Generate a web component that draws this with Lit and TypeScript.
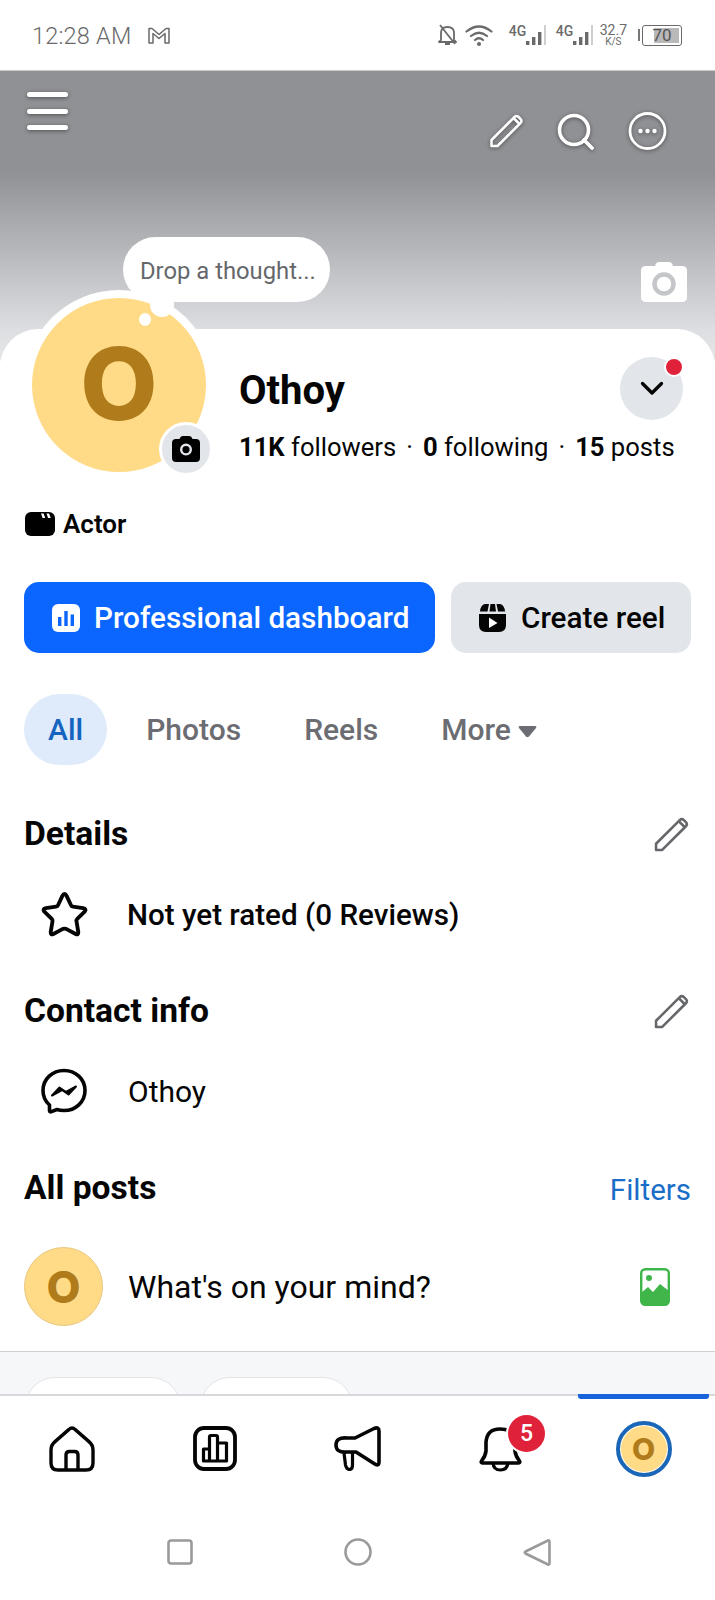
import { LitElement, css, html, svg } from "lit";
import { customElement } from "lit/decorators.js";

const pencilPath = svg`<path d="M2 32V26L25 3Q27 1 29 3L31 5Q33 7 31 9L8 32Z" fill="none" stroke="currentColor" stroke-width="2.5" stroke-linejoin="round"/><path d="M24.5 4.5L29.5 9.5" fill="none" stroke="currentColor" stroke-width="2.5"/>`;

const pencil = html`<svg class="pencil" viewBox="0 0 34 34">${pencilPath}</svg>`;

const cameraPath = "M9 3Q9.6 1 12 1H18Q20.4 1 21 3L21.5 4H25Q29 4 29 8V23Q29 27 25 27H5Q1 27 1 23V8Q1 4 5 4H8.5ZM15 8.5A6 6 0 1 0 15 20.5A6 6 0 1 0 15 8.5ZM15 11A3.6 3.6 0 1 1 15 18.2A3.6 3.6 0 1 1 15 11Z";

const bars = html`<svg width="22" height="21" viewBox="0 0 22 21">
  <path d="M1 16h3.4v4H1zM7 12h3.4v8H7zM13 7h3.4v13H13z" fill="#6a6a6a"/>
  <path d="M19 0h2v20h-2z" fill="#cfcfcf"/>
</svg>`;

@customElement("app-root")
export class AppRoot extends LitElement {
  render() {
    return html`
      <div class="status">
        <span class="status__time">12:28 AM</span>
        <svg class="status__gmail" viewBox="0 0 24 17">
          <path d="M2 16V1.5H5L12 7.5L19 1.5H22V16H18V6.5L12 11.5L6 6.5V16Z" fill="none" stroke="#6a6a6a" stroke-width="1.5" stroke-linejoin="round"/>
        </svg>
        <div class="status__right">
          <svg width="19" height="22" viewBox="0 0 19 22">
            <path d="M3 16V9Q3 3 9.5 3Q16 3 16 9V16L18 18H1L3 16ZM7 20H12M2 1L17 20" fill="none" stroke="#6a6a6a" stroke-width="1.8" stroke-linejoin="round"/>
          </svg>
          <svg class="status__wifi" width="28" height="22" viewBox="0 0 28 22">
            <path d="M1.5 7.5Q14 -2.5 26.5 7.5M6 12Q14 5.5 22 12M10 16Q14 12.5 18 16" fill="none" stroke="#6a6a6a" stroke-width="2.2" stroke-linecap="round"/>
            <circle cx="14" cy="20" r="2" fill="#6a6a6a"/>
          </svg>
          <div class="signal signal--first"><span class="signal__label">4G</span>${bars}</div>
          <div class="signal"><span class="signal__label">4G</span>${bars}</div>
          <div class="speed"><span>32.7</span><span class="speed__unit">K/S</span></div>
          <div class="battery">
            <span class="battery__nub"></span>
            <div class="battery__body"><span class="battery__fill"></span><span class="battery__num">70</span></div>
          </div>
        </div>
      </div>

      <div class="cover">
        <div class="cover__burger"><span></span><span></span><span></span></div>
        <div class="cover__actions">
          <svg width="35" height="34" viewBox="0 0 34 34">${pencilPath}</svg>
          <svg width="38" height="37" viewBox="0 0 38 37">
            <circle cx="17" cy="17" r="14.5" fill="none" stroke="#fff" stroke-width="3.6"/>
            <path d="M27 27L35 35" stroke="#fff" stroke-width="3.8" stroke-linecap="round"/>
          </svg>
          <svg width="39" height="38" viewBox="0 0 39 38">
            <circle cx="19.5" cy="19" r="17.5" fill="none" stroke="#fff" stroke-width="2.8"/>
            <circle cx="12.5" cy="19" r="2.2" fill="#fff"/>
            <circle cx="19.5" cy="19" r="2.2" fill="#fff"/>
            <circle cx="26.5" cy="19" r="2.2" fill="#fff"/>
          </svg>
        </div>
        <div class="bubble">Drop a thought...</div>
        <svg class="cover__camera" width="46" height="40" viewBox="0 0 46 40">
          <path d="M14 4Q15 0 18 0H28Q31 0 32 4H41Q46 4 46 9V35Q46 40 41 40H5Q0 40 0 35V9Q0 4 5 4Z" fill="#fff"/>
          <circle cx="23" cy="22" r="9.5" fill="none" stroke="#c4c6c9" stroke-width="4.5"/>
        </svg>
      </div>

      <div class="card">
        <div class="head">
          <div class="avatar">
            <div class="avatar__disc">O</div>
            <span class="avatar__puff"></span>
            <span class="avatar__dot"></span>
            <div class="avatar__badge">
              <svg width="30" height="28" viewBox="0 0 30 28"><path fill-rule="evenodd" d="${cameraPath}"/></svg>
            </div>
          </div>
          <div class="info">
            <div class="info__top">
              <div class="info__name">Othoy</div>
              <div class="info__more">
                <svg width="24" height="15" viewBox="0 0 24 15"><path d="M2.5 2.5L12 12L21.5 2.5" fill="none" stroke="#050505" stroke-width="3.3" stroke-linecap="round" stroke-linejoin="round"/></svg>
                <span class="info__dot"></span>
              </div>
            </div>
            <div class="info__stats"><b>11K</b> followers<span class="info__sep">·</span><b>0</b> following<span class="info__sep">·</span><b>15</b> posts</div>
          </div>
        </div>

        <div class="actor">
          <svg width="30" height="24" viewBox="0 0 30 24">
            <rect width="30" height="24" rx="6"/>
            <path d="M16 1.5h2.6l1.6 4.5h-2.6zM21.5 1.5h2.6l1.6 4.5h-2.6z" fill="#fff"/>
          </svg>
          <span>Actor</span>
        </div>

        <div class="btns">
          <div class="btn btn--primary">
            <svg width="28" height="28" viewBox="0 0 28 28">
              <rect width="28" height="28" rx="6" fill="#fff"/>
              <path d="M6 13h3.4v9H6zM12.3 7h3.4v15h-3.4zM18.6 10.5H22V22h-3.4z" fill="#0a66ff"/>
            </svg>
            <span>Professional dashboard</span>
          </div>
          <div class="btn btn--gray">
            <svg width="29" height="29" viewBox="0 0 29 29">
              <path d="M1 11H28V22Q28 29 21 29H8Q1 29 1 22Z" fill="#050505"/>
              <path d="M7 1H11L9.5 8.5H2Q2.5 2 7 1ZM12.5 1H17L18 8.5H11.5ZM18.5 1H22Q26.5 2 27 8.5H20Z" fill="#050505"/>
              <path d="M11 14.5L19.5 20L11 25Z" fill="#fff"/>
            </svg>
            <span>Create reel</span>
          </div>
        </div>

        <div class="tabs">
          <div class="tab tab--on">All</div>
          <div class="tab">Photos</div>
          <div class="tab">Reels</div>
          <div class="tab">More<svg class="tab__caret" width="19" height="13" viewBox="0 0 19 13"><path d="M2 1H17Q19 1 18 3L11 11.5Q9.5 13 8 11.5L1 3Q0 1 2 1Z" fill="#6b6d72"/></svg></div>
        </div>

        <div class="sec sec--details">
          <h2>Details</h2>
          ${pencil}
        </div>
        <div class="row row--details">
          <svg width="51" height="48" viewBox="0 0 48 45">
            <path d="M24 3.5Q25 3.5 26 5.5L30 14Q30.6 15.4 32 15.6L41.5 17Q45 17.7 43.2 20L36 27Q35 28 35.3 29.5L37 39.5Q37.3 42.5 34.5 41.3L25.5 36.5Q24 36 22.5 36.5L13.5 41.3Q10.7 42.5 11 39.5L12.7 29.5Q13 28 12 27L4.8 20Q3 17.7 6.5 17L16 15.6Q17.4 15.4 18 14L22 5.5Q23 3.5 24 3.5Z" fill="none" stroke="#050505" stroke-width="3.6" stroke-linejoin="round"/>
          </svg>
          <span class="row__strong">Not yet rated (0 Reviews)</span>
        </div>

        <div class="sec sec--contact">
          <h2>Contact info</h2>
          ${pencil}
        </div>
        <div class="row row--contact">
          <svg width="48" height="46" viewBox="0 0 48 46">
            <path d="M24 2.5C12.5 2.5 3 11 3 22.5C3 28.5 5.5 33.5 9.5 37V42.5Q9.5 44.5 11.5 43.6L17 41.5C19 42.2 21.5 42.5 24 42.5C35.5 42.5 45 34 45 22.5C45 11 35.5 2.5 24 2.5Z" fill="none" stroke="#050505" stroke-width="3.6" stroke-linejoin="round"/>
            <path d="M12 27.5L19.5 19.5L26 24L36 18.5L28.5 26.5L22 22Z" fill="#050505" stroke="#050505" stroke-width="2" stroke-linejoin="round"/>
          </svg>
          <span>Othoy</span>
        </div>

        <div class="sec sec--posts">
          <h2>All posts</h2>
          <span class="sec__link">Filters</span>
        </div>
        <div class="composer">
          <div class="composer__avatar">O</div>
          <span class="composer__text">What's on your mind?</span>
          <svg width="30" height="38" viewBox="0 0 30 38">
            <rect x="1.2" y="1.2" width="27.6" height="35.6" rx="4" fill="#fff" stroke="#3fb54a" stroke-width="2.4"/>
            <path d="M1 25L8 19L13 24L20 16L29 23V33Q29 37 25 37H5Q1 37 1 33Z" fill="#3fb54a"/>
            <circle cx="9" cy="10" r="3" fill="#3fb54a"/>
          </svg>
        </div>
      </div>

      <div class="feed">
        <span class="feed__chip feed__chip--a"></span>
        <span class="feed__chip feed__chip--b"></span>
      </div>

      <nav class="nav">
        <div class="nav__cell">
          <svg width="46" height="46" viewBox="0 0 46 46">
            <path d="M23 2Q24.6 2 26 3.4L40 15.6Q44 19 44 24V37Q44 44 37 44H9Q2 44 2 37V24Q2 19 6 15.6L20 3.4Q21.4 2 23 2Z" fill="none" stroke="#050505" stroke-width="3.4" stroke-linejoin="round"/>
            <path d="M17 44V29Q17 25.5 20.5 25.5H25.5Q29 25.5 29 29V44" fill="none" stroke="#050505" stroke-width="3.4"/>
          </svg>
        </div>
        <div class="nav__cell">
          <svg width="44" height="45" viewBox="0 0 44 45">
            <rect x="2" y="2" width="40" height="41" rx="9" fill="none" stroke="#050505" stroke-width="3.8"/>
            <path d="M10.5 35V23H16.5V11Q16.5 9.5 18 9.5H23Q24.5 9.5 24.5 11V17H33.5V35ZM16.5 23V35M24.5 17V35" fill="none" stroke="#050505" stroke-width="3.2" stroke-linejoin="round"/>
          </svg>
        </div>
        <div class="nav__cell">
          <svg width="47" height="45" viewBox="0 0 47 45">
            <path d="M13 12H21L40 2.5Q45 0.5 45 5V36Q45 41 40 37.5L22 26H13Q2 27 2 19Q2 11 13 12Z" fill="none" stroke="#050505" stroke-width="3.6" stroke-linejoin="round"/>
            <path d="M10 27L11.5 39Q12.5 43.5 15.5 43.5Q18.5 43.5 18.5 39V27" fill="none" stroke="#050505" stroke-width="3.2"/>
          </svg>
        </div>
        <div class="nav__cell">
          <div class="bell">
            <svg width="43" height="46" viewBox="0 0 43 46">
              <path d="M21 3Q8 3 7 16V25Q6.5 30 2.5 35Q1.5 37 4 37H39Q41.5 37 40.5 35Q36.5 30 36 25V16Q35 3 21 3Z" fill="none" stroke="#050505" stroke-width="3.6" stroke-linejoin="round"/>
              <path d="M14 37Q14.5 44 21.5 44Q28 44 29 37" fill="none" stroke="#050505" stroke-width="3.2"/>
            </svg>
            <span class="bell__badge">5</span>
          </div>
        </div>
        <div class="nav__cell">
          <span class="nav__bar"></span>
          <div class="nav__me"><span>O</span></div>
        </div>
      </nav>

      <div class="android">
        <span class="android__item"><svg width="26" height="26" viewBox="0 0 26 26"><rect x="1.5" y="1.5" width="23" height="23" rx="2.5" fill="none" stroke="#9a9a9a" stroke-width="2.6"/></svg></span>
        <span class="android__item"><svg width="28" height="28" viewBox="0 0 28 28"><circle cx="14" cy="14" r="12.5" fill="none" stroke="#9a9a9a" stroke-width="2.6"/></svg></span>
        <span class="android__item"><svg width="28" height="29" viewBox="0 0 28 29"><path d="M25 2.5Q26.5 2 26.5 4V25Q26.5 27 25 26.5L2.5 15.5Q1 14.5 2.5 13.5Z" fill="none" stroke="#9a9a9a" stroke-width="2.6" stroke-linejoin="round"/></svg></span>
      </div>
    `;
  }

  static styles = css`
    :host {
      display: block;
      width: 715px;
      height: 1600px;
      overflow: hidden;
      background: #fff;
      color: #050505;
      font-family: Roboto, "Liberation Sans", sans-serif;
    }

    svg {
      display: block;
      flex: none;
    }

    .status {
      height: 71px;
      box-sizing: border-box;
      display: flex;
      align-items: center;
      padding: 0 32px 0 32px;
      color: #6a6a6a;
      border-bottom: 1px solid #c9cacc;
    }

    .status__time {
      font-size: 23.5px;
      font-weight: 300;
      letter-spacing: 0.2px;
      margin-top: 2px;
    }

    .status__gmail {
      width: 24px;
      height: 17px;
      margin-left: 16px;
    }

    .status__right {
      margin-left: auto;
      display: flex;
      align-items: center;
    }

    .status__wifi {
      margin-left: 8px;
    }

    .signal {
      display: flex;
      align-items: flex-end;
      margin-left: 9px;
      position: relative;
    }

    .signal--first {
      margin-left: 16px;
    }

    .signal__label {
      font-size: 14px;
      font-weight: 500;
      align-self: flex-start;
      line-height: 13px;
      width: 19px;
      margin-right: -3px;
    }

    .speed {
      display: flex;
      flex-direction: column;
      align-items: center;
      margin-left: 6px;
      font-size: 14px;
      line-height: 13px;
    }

    .speed__unit {
      font-size: 10px;
      line-height: 9px;
    }

    .battery {
      display: flex;
      align-items: center;
      margin-left: 11px;
      margin-right: 1px;
    }

    .battery__nub {
      width: 2px;
      height: 12px;
      background: #777;
      margin-right: 2px;
    }

    .battery__body {
      width: 40px;
      height: 21px;
      box-sizing: border-box;
      border: 1.5px solid #6a6a6a;
      border-radius: 3px;
      position: relative;
      display: flex;
      align-items: center;
      justify-content: center;
      font-size: 17px;
      color: #555;
    }

    .battery__fill {
      position: absolute;
      top: 2px;
      right: 2px;
      bottom: 2px;
      width: 25px;
      background: #b9b9b9;
    }

    .battery__num {
      position: relative;
    }

    .cover {
      height: 290px;
      position: relative;
      box-sizing: border-box;
      padding: 21px 48px 0 27px;
      display: flex;
      justify-content: space-between;
      align-items: flex-start;
      background: linear-gradient(#909195 0, #909195 100px, #dcdee1 258px, #e4e6e8 290px);
    }

    .cover__burger {
      width: 41px;
      display: flex;
      flex-direction: column;
      gap: 11.5px;
      filter: drop-shadow(0 1px 2px rgba(0, 0, 0, 0.45));
    }

    .cover__burger span {
      height: 5px;
      border-radius: 3px;
      background: #fff;
    }

    .cover__actions {
      display: flex;
      align-items: center;
      margin-top: 20px;
      gap: 33px;
      color: #fff;
      filter: drop-shadow(0 1px 2px rgba(0, 0, 0, 0.45));
    }

    .bubble {
      position: absolute;
      left: 123px;
      top: 166px;
      width: 207px;
      height: 65px;
      box-sizing: border-box;
      padding: 3px 0 0 17px;
      display: flex;
      align-items: center;
      border-radius: 33px;
      background: #fff;
      color: #65676b;
      font-size: 23.8px;
      white-space: nowrap;
    }

    .cover__camera {
      position: absolute;
      left: 641px;
      top: 191px;
    }

    .card {
      position: relative;
      margin-top: -32px;
      height: 1022px;
      box-sizing: border-box;
      padding: 0 24px;
      background: #fff;
      border-radius: 38px 38px 0 0;
    }

    .head {
      display: flex;
      align-items: flex-start;
    }

    .avatar {
      position: relative;
      margin-top: -39px;
      width: 190px;
      height: 190px;
      flex: none;
    }

    .avatar__disc {
      box-sizing: border-box;
      width: 190px;
      height: 190px;
      padding-bottom: 3px;
      border: 8px solid #fff;
      border-radius: 50%;
      background: #ffdb87;
      color: #b07c1b;
      font-family: Inter, Roboto, sans-serif;
      font-size: 100px;
      font-weight: 800;
      display: flex;
      align-items: center;
      justify-content: center;
    }

    .avatar__puff {
      position: absolute;
      left: 126px;
      top: 3px;
      width: 24px;
      height: 24px;
      border-radius: 50%;
      background: #fff;
    }

    .avatar__dot {
      position: absolute;
      left: 115px;
      top: 23px;
      width: 12px;
      height: 13px;
      border-radius: 50%;
      background: #fff;
    }

    .avatar__badge {
      position: absolute;
      left: 135px;
      top: 132px;
      width: 54px;
      height: 54px;
      box-sizing: border-box;
      border: 3px solid #fff;
      border-radius: 50%;
      background: #e2e5e9;
      display: flex;
      align-items: center;
      justify-content: center;
    }

    .info {
      margin-left: 25px;
      margin-top: 28px;
      flex: 1;
      min-width: 0;
      padding-right: 8px;
    }

    .info__top {
      display: flex;
      align-items: center;
      justify-content: space-between;
      height: 63px;
    }

    .info__name {
      font-size: 40px;
      font-weight: 700;
      line-height: 46px;
      padding-top: 4px;
    }

    .info__more {
      position: relative;
      width: 63px;
      height: 63px;
      border-radius: 50%;
      background: #e2e5e9;
      display: flex;
      align-items: center;
      justify-content: center;
    }

    .info__dot {
      position: absolute;
      right: -1px;
      top: 0;
      width: 16px;
      height: 16px;
      border: 2px solid #fff;
      border-radius: 50%;
      background: #e0213a;
    }

    .info__stats {
      margin-top: 11px;
      font-size: 25.6px;
      line-height: 32px;
      white-space: nowrap;
    }

    .info__stats b {
      font-weight: 700;
    }

    .info__sep {
      padding: 0 10px;
    }

    .actor {
      display: flex;
      align-items: center;
      height: 24px;
      margin-top: 32px;
      margin-left: 1px;
      gap: 8px;
      font-size: 26px;
      font-weight: 600;
    }

    .btns {
      display: flex;
      gap: 16px;
      margin-top: 46px;
    }

    .btn {
      height: 71px;
      border-radius: 15px;
      display: flex;
      align-items: center;
      font-size: 29.7px;
      font-weight: 500;
      white-space: nowrap;
    }

    .btn--primary {
      width: 411px;
      padding-left: 28px;
      gap: 14px;
      box-sizing: border-box;
      background: #0a66ff;
      color: #fff;
    }

    .btn--gray {
      width: 240px;
      padding-left: 27px;
      gap: 14px;
      box-sizing: border-box;
      background: #e2e5e9;
    }

    .tabs {
      display: flex;
      gap: 15px;
      margin-top: 41px;
    }

    .tab {
      height: 71px;
      padding: 0 24px;
      border-radius: 36px;
      display: flex;
      align-items: center;
      font-size: 30px;
      font-weight: 500;
      color: #6b6d72;
    }

    .tab--on {
      background: #dfebfb;
      color: #1565c0;
    }

    .tab__caret {
      margin-left: 7px;
      margin-top: 3px;
    }

    .sec {
      display: flex;
      align-items: center;
      justify-content: space-between;
      height: 40px;
    }

    .sec h2 {
      margin: 0;
      font-size: 33.6px;
      font-weight: 700;
      line-height: 40px;
    }

    .sec--details {
      margin-top: 49px;
    }

    .sec--contact {
      margin-top: 53px;
    }

    .sec--posts {
      margin-top: 54px;
    }

    .pencil {
      width: 35px;
      height: 35px;
      margin-right: 2px;
      color: #65676b;
    }

    .sec__link {
      padding-top: 3px;
      font-size: 29.5px;
      color: #1a6ec8;
    }

    .row {
      display: flex;
      align-items: center;
      gap: 40px;
      padding-left: 16px;
      font-size: 30px;
    }

    .row--details {
      margin-top: 36px;
      gap: 37px;
      padding-left: 15px;
    }

    .row--contact {
      margin-top: 37px;
    }

    .row__strong {
      padding-top: 2px;
      font-size: 29.6px;
      font-weight: 500;
    }

    .composer {
      display: flex;
      align-items: center;
      margin-top: 39px;
    }

    .composer__avatar {
      box-sizing: border-box;
      width: 79px;
      height: 79px;
      border: 1px solid #e8c77e;
      border-radius: 50%;
      background: #ffdb87;
      color: #b07c1b;
      font-family: Inter, Roboto, sans-serif;
      font-size: 44px;
      font-weight: 800;
      display: flex;
      align-items: center;
      justify-content: center;
    }

    .composer__text {
      margin-left: 25px;
      margin-right: auto;
      font-size: 32px;
    }

    .composer svg {
      margin-right: 21px;
    }

    .feed {
      height: 43px;
      box-sizing: border-box;
      padding: 25px 0 0 25px;
      display: flex;
      gap: 19px;
      overflow: hidden;
      background: #f6f7f9;
      border-top: 1px solid #cfd1d5;
    }

    .feed__chip {
      flex: none;
      height: 60px;
      border: 1px solid #e2e4e8;
      border-radius: 30px;
      background: #fff;
    }

    .feed__chip--a {
      width: 154px;
    }

    .feed__chip--b {
      width: 151px;
    }

    .nav {
      display: grid;
      grid-template-columns: repeat(5, 143px);
      height: 106px;
      box-sizing: border-box;
      border-top: 2px solid #d6d8dc;
      padding-top: 30px;
    }

    .nav__cell {
      position: relative;
      display: flex;
      justify-content: center;
      align-items: flex-start;
    }

    .nav__bar {
      position: absolute;
      left: 6px;
      right: 6px;
      top: -32px;
      height: 5px;
      border-radius: 0 0 3px 3px;
      background: #1763dc;
    }

    .bell {
      position: relative;
    }

    .bell__badge {
      position: absolute;
      left: 29px;
      top: -11px;
      width: 37px;
      height: 37px;
      border-radius: 50%;
      background: #e0213a;
      box-shadow: 0 0 0 2px #fff;
      color: #fff;
      font-size: 23px;
      font-weight: 500;
      display: flex;
      align-items: center;
      justify-content: center;
    }

    .nav__me {
      box-sizing: border-box;
      width: 56px;
      height: 56px;
      margin-top: -5px;
      border: 4px solid #1a66b8;
      border-radius: 50%;
      background: #ffdb87;
      box-shadow: inset 0 0 0 1px #fff;
      color: #b07c1b;
      font-family: Inter, Roboto, sans-serif;
      font-size: 30px;
      font-weight: 800;
      display: flex;
      align-items: center;
      justify-content: center;
    }

    .android {
      display: grid;
      grid-template-columns: 179px 178px 180px;
      padding: 38px 0 0 90px;
    }

    .android__item {
      display: flex;
      justify-content: center;
      align-items: center;
      height: 28px;
    }
  `;
}
